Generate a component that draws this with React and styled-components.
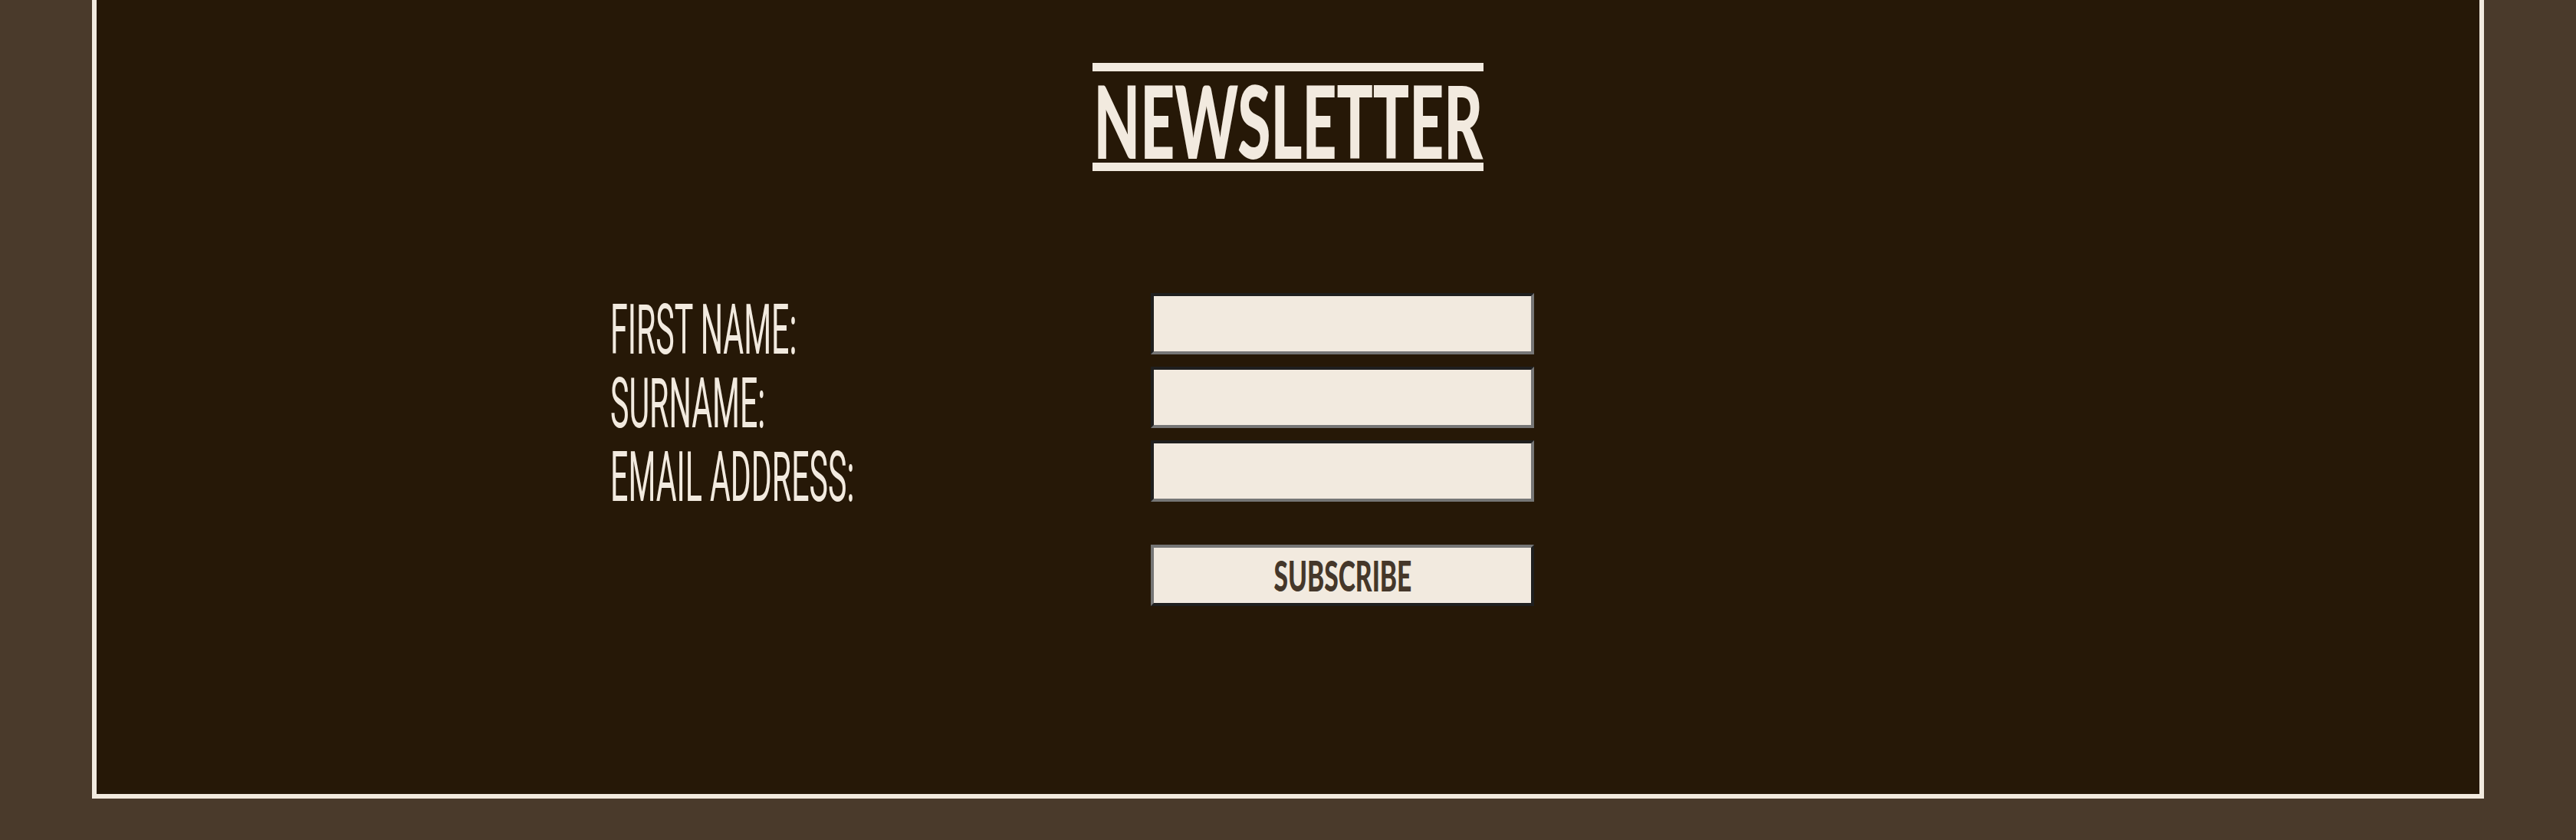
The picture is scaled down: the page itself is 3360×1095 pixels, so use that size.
import React from 'react';
import styled, { createGlobalStyle } from 'styled-components';

const cream = '#f2eadf';
const panel = '#261807';
const outer = '#4a3a2b';
const ink = '#45372a';

const GlobalStyle = createGlobalStyle`
  html, body {
    margin: 0;
    padding: 0;
    background: ${outer};
  }
  * {
    box-sizing: border-box;
  }
`;

const Page = styled.div`
  padding: 0 120px 54px;
  width: 3360px;
  height: 1095px;
  overflow: hidden;
`;

const Panel = styled.section`
  background: ${panel};
  border: 6px solid ${cream};
  border-top: 0;
  height: 1041px;
  padding-top: 82px;
  display: flex;
  flex-direction: column;
  align-items: flex-start;
`;

const Heading = styled.h2`
  align-self: center;
  margin: 0;
  width: 510px;
  height: 141px;
  border-top: 11px solid ${cream};
  border-bottom: 11px solid ${cream};
  display: flex;
  justify-content: center;
`;

const HeadingText = styled.span`
  display: block;
  height: 119px;
  line-height: 126px;
  font-family: Lato, 'Liberation Sans', sans-serif;
  font-weight: 900;
  font-size: 132px;
  color: ${cream};
  white-space: nowrap;
  transform: scaleX(0.594);
  transform-origin: center;
`;

const Form = styled.form`
  margin: 159px 0 0 670px;
  display: grid;
  grid-template-columns: 705px 500px;
  row-gap: 16px;
`;

const Label = styled.label`
  display: block;
  height: 80px;
  line-height: 96px;
  font-family: Roboto, 'Liberation Sans', sans-serif;
  font-weight: 400;
  font-size: 91px;
  color: ${cream};
  white-space: nowrap;
  transform: scaleX(0.452);
  transform-origin: left;
`;

const Field = styled.input`
  display: block;
  width: 500px;
  height: 80px;
  margin: 0;
  background: ${cream};
  border: 4px solid;
  border-color: #1f1f1f #767676 #767676 #1f1f1f;
  outline: none;
`;

const Button = styled.button`
  grid-column: 2;
  margin-top: 40px;
  width: 500px;
  height: 80px;
  padding: 0;
  background: ${cream};
  border: 4px solid;
  border-color: #767676 #1f1f1f #1f1f1f #767676;
  display: flex;
  justify-content: center;
  cursor: pointer;
`;

const ButtonText = styled.span`
  display: block;
  line-height: 72px;
  font-family: Lato, 'Liberation Sans', sans-serif;
  font-weight: 900;
  font-size: 55px;
  color: ${ink};
  white-space: nowrap;
  transform: scaleX(0.61);
`;

const fields = [
  { id: 'first', label: 'FIRST NAME:', type: 'text' },
  { id: 'surname', label: 'SURNAME:', type: 'text' },
  { id: 'email', label: 'EMAIL ADDRESS:', type: 'email' },
];

export default function App() {
  return (
    <>
      <GlobalStyle />
      <Page>
        <Panel>
          <Heading>
            <HeadingText>NEWSLETTER</HeadingText>
          </Heading>
          <Form onSubmit={e => e.preventDefault()}>
            {fields.map(f => (
              <React.Fragment key={f.id}>
                <Label htmlFor={f.id}>{f.label}</Label>
                <Field id={f.id} type={f.type} />
              </React.Fragment>
            ))}
            <Button type="submit">
              <ButtonText>SUBSCRIBE</ButtonText>
            </Button>
          </Form>
        </Panel>
      </Page>
    </>
  );
}
